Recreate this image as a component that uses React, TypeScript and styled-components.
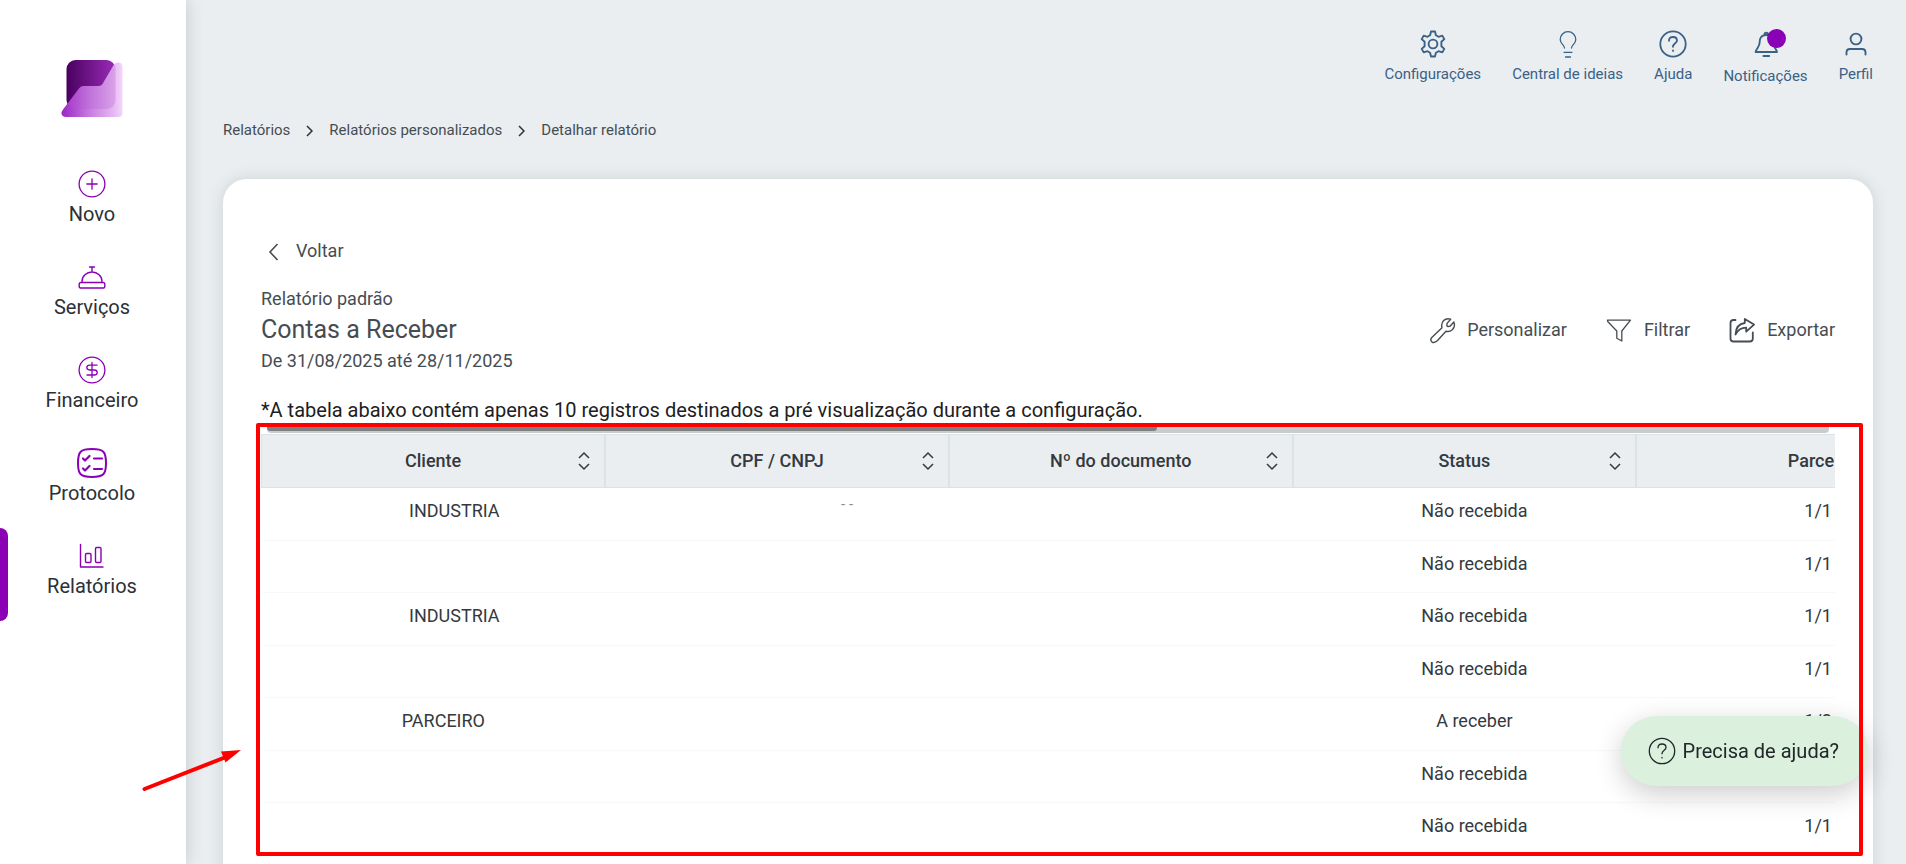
import React from "react";
import styled, { createGlobalStyle } from "styled-components";

const GlobalStyle = createGlobalStyle`
  *, *::before, *::after { box-sizing: border-box; }
  body {
    margin: 0;
    background: #eaeef1;
    color: #2b3136;
    font-family: Roboto, "Liberation Sans", sans-serif;
  }
  button { font: inherit; color: inherit; background: none; border: 0; padding: 0; cursor: pointer; }
  a { color: inherit; text-decoration: none; }
  svg { display: block; flex: none; }
`;

const Page = styled.div`
  display: flex;
  height: 100vh;
  overflow: hidden;
`;

const Sidebar = styled.aside`
  flex: none;
  width: 186px;
  display: flex;
  flex-direction: column;
  background: #fff;
  box-shadow: 0 0 16px rgba(60, 70, 60, 0.22);
`;

const LogoLink = styled.a`
  display: flex;
  justify-content: center;
  padding: 60px 2px 38px 0;
`;

const NavItem = styled.a<{ $active?: boolean }>`
  position: relative;
  display: flex;
  flex-direction: column;
  align-items: center;
  height: 93px;
  padding: 14px 2px 0 0;
  gap: 4px;
  font-size: 20px;
  line-height: 24px;

  &::before {
    content: "";
    display: ${(p) => (p.$active ? "block" : "none")};
    position: absolute;
    left: 0;
    top: 0;
    bottom: 0;
    width: 8px;
    border-radius: 0 8px 8px 0;
    background: #8a00b4;
  }
`;

const NavIcon = styled.span`
  display: flex;
  align-items: center;
  justify-content: center;
  height: 28px;
`;

const Main = styled.main`
  flex: 1;
  min-width: 0;
  padding: 0 33px 0 37px;
`;

const TopBar = styled.header`
  display: flex;
  justify-content: flex-end;
  gap: 31px;
  padding-top: 30px;
`;

const TopAction = styled.button<{ $drop?: boolean }>`
  position: relative;
  display: flex;
  flex-direction: column;
  align-items: center;
  justify-content: flex-start;
  gap: ${(p) => (p.$drop ? 8 : 6)}px;
  height: 60px;
  color: #3a6186;
  font-size: 15px;
  line-height: 20px;
`;

const NoticeDot = styled.span`
  position: absolute;
  top: -1px;
  left: 50%;
  margin-left: 1px;
  width: 19px;
  height: 19px;
  border-radius: 50%;
  background: #8a00b4;
`;

const Breadcrumb = styled.nav`
  display: flex;
  align-items: center;
  gap: 16px;
  padding: 30px 0 39px;
  color: #454d53;
  font-size: 15px;
  line-height: 20px;
`;

const Card = styled.section`
  min-height: 720px;
  padding: 60px 38px 40px;
  border-radius: 24px 24px 0 0;
  background: #fff;
  box-shadow: 0 0 16px rgba(60, 70, 60, 0.16);
  color: #454d53;
`;

const BackButton = styled.button`
  display: flex;
  align-items: center;
  gap: 11px;
  font-size: 18px;
  line-height: 24px;
`;

const TitleRow = styled.div`
  display: flex;
  justify-content: space-between;
  align-items: center;
  margin-top: 24px;
`;

const Subtitle = styled.p`
  margin: 0;
  font-size: 18px;
  line-height: 24px;
`;

const Title = styled.h1`
  margin: 0;
  font-size: 25px;
  font-weight: 400;
  line-height: 38px;
`;

const Tools = styled.div`
  display: flex;
  gap: 38px;
`;

const Tool = styled.button`
  display: flex;
  align-items: center;
  gap: 11px;
  font-size: 18px;
  line-height: 24px;
`;

const Note = styled.p`
  margin: 24px 0 0;
  color: #1c2023;
  font-size: 20px;
  line-height: 27px;
`;

const TableRegion = styled.div`
  position: relative;
`;

const ScrollTrack = styled.div`
  height: 9px;
  margin: 0 6px 1px;
  border-radius: 4px;
  background: #c8cccf;
`;

const ScrollThumb = styled.div`
  width: 57%;
  height: 7px;
  border-radius: 4px;
  background: #7d7f81;
`;

const TableClip = styled.div`
  overflow: hidden;
`;

const Table = styled.table`
  width: 1720px;
  table-layout: fixed;
  border-collapse: collapse;
  color: #33393e;
  font-size: 18px;
  line-height: 24px;
`;

const HeadCell = styled.th`
  height: 53px;
  padding: 0;
  border: 1px solid #dde2e5;
  border-right-width: 2px;
  background: #eaeef1;
  font-weight: 500;

  &:last-child { padding-left: 20px; }
`;

const HeadInner = styled.div`
  display: grid;
  grid-template-columns: 1fr auto 1fr;
  align-items: center;
`;

const SortButton = styled.button`
  grid-column: 3;
  justify-self: end;
  margin-right: 13px;
`;

const HeadLabel = styled.span`
  grid-column: 2;
`;

const Cell = styled.td`
  height: 53px;
  padding: 0 0 6px 20px;
  border-bottom: 1px solid #f7f8f8;
  text-align: center;

  tr:nth-child(even) > & { height: 52px; }
`;

const Blank = styled.span<{ $wide?: boolean }>`
  display: inline-block;
  width: ${(p) => (p.$wide ? 120 : 22)}px;
`;

const Dashes = styled.span`
  color: #8b9094;
  font-size: 15px;
  line-height: 10px;
  vertical-align: 9px;
`;

const Highlight = styled.div`
  position: absolute;
  z-index: 3;
  inset: -1px -28px 0 -5px;
  border: 4px solid #ff0000;
  border-radius: 2px;
  pointer-events: none;
`;

const Pointer = styled.svg`
  position: absolute;
  z-index: 3;
  left: -119px;
  bottom: 64px;
`;

const HelpButton = styled.button`
  position: fixed;
  z-index: 2;
  right: 38px;
  bottom: 78px;
  display: flex;
  align-items: center;
  gap: 7px;
  height: 70px;
  && { padding: 0 29px 0 27px; }
  border-radius: 35px;
  background: #dbf0dd;
  box-shadow: 0 8px 28px rgba(0, 0, 0, 0.2);
  color: #22272a;
  font-size: 20px;
  line-height: 24px;
`;

const Logo = () => (
  <svg width="62" height="58" viewBox="0 0 62 58">
    <defs>
      <linearGradient id="dark" x1="0" x2="1">
        <stop offset="0" stopColor="#4a0060" />
        <stop offset="1" stopColor="#9a2cb8" />
      </linearGradient>
      <linearGradient id="light" x1="0" x2="1">
        <stop offset="0" stopColor="#9a24c4" />
        <stop offset="0.45" stopColor="#c67adf" />
        <stop offset="0.85" stopColor="#e6b8f2" />
        <stop offset="1" stopColor="#f4d8fc" />
      </linearGradient>
      <clipPath id="sheet">
        <path d="M53 4.500Q55 2 58 2.500Q61.500 3 61.500 7V53Q61.500 57 57.500 57H5Q1.500 57 .5 54Q0 52 2 49.500L18 28.500Q19.500 26 22 26H37Q40 26.500 41.500 24Z" />
      </clipPath>
    </defs>
    <rect x="5.500" y="0" width="49" height="49" rx="9" fill="url(#dark)" />
    <g clipPath="url(#sheet)">
      <rect width="62" height="58" fill="url(#light)" />
      <rect x="5.500" y="0" width="49" height="49" rx="9" fill="#b055cc" opacity=".25" />
    </g>
  </svg>
);

const Line = ({ size = 28, w = 1.3, children, color = "currentColor" }: {
  size?: number; w?: number; color?: string; children: React.ReactNode;
}) => (
  <svg width={size} height={size} viewBox="0 0 28 28" fill="none" stroke={color}
    strokeWidth={w} strokeLinecap="round" strokeLinejoin="round" aria-hidden="true">
    {children}
  </svg>
);

const PURPLE = "#8a00b4";

const PlusIcon = () => (
  <Line color={PURPLE}><circle cx="14" cy="14" r="12.900" /><path d="M14 8.800v10.400M8.800 14h10.400" /></Line>
);
const BellDeskIcon = () => (
  <Line color={PURPLE} w={1.4}>
    <path d="M11.500 4h5M14 4v5M4 19.500v-1A10 9.500 0 0 1 24 18.500v1M3 19.500H25Q26.800 19.500 26.800 21.500V23.500Q26.800 25 25.500 25H2.500Q1.200 25 1.200 23.500V21.500Q1.200 19.500 3 19.500Z" />
  </Line>
);
const MoneyIcon = () => (
  <Line color={PURPLE}>
    <circle cx="14" cy="14" r="12.900" />
    <path d="M14 6.500v15M19 9.200H11.700Q8.800 9.200 8.800 11.600Q8.800 14 11.700 14H16.300Q19.200 14 19.200 16.500Q19.200 19 16.300 19H9" />
  </Line>
);
const ChecklistIcon = () => (
  <svg width="30" height="30" viewBox="0 0 30 30" fill="none" stroke={PURPLE} strokeWidth="2"
    strokeLinecap="round" strokeLinejoin="round" aria-hidden="true">
    <path d="M15 1C26.500 1 29 3.500 29 15S26.500 29 15 29S1 26.500 1 15S3.500 1 15 1Z" />
    <path d="M6 10.500l2 2L12.500 8M6 20.500l2 2L12.500 18M17 10.500h8M17 21h8" strokeWidth="2.200" />
  </svg>
);
const ChartIcon = () => (
  <Line color={PURPLE} w={1.4}>
    <path d="M2.500 2.500V25H25" />
    <rect x="7.500" y="11.500" width="5.500" height="9" rx="1.200" />
    <rect x="17.500" y="5.500" width="5.500" height="15" rx="1.200" />
  </Line>
);

const GearIcon = () => (
  <Line w={1.9}>
    <circle cx="14" cy="14" r="4.400" />
    <path d="M12 1.500h4l.9 3.800 2.600 1.500 3.800-1.200 2 3.500-2.900 2.600v4.600l2.900 2.600-2 3.500-3.800-1.200-2.600 1.500L16 26.500h-4l-.9-3.800-2.600-1.500-3.800 1.200-2-3.500 2.900-2.600v-4.600L2.700 9.100l2-3.500 3.800 1.200 2.600-1.500z" />
  </Line>
);
const BulbIcon = () => (
  <Line w={1.3}>
    <path d="M10.500 18C10.500 15 6.200 14 6.200 9.500a7.800 7.800 0 0 1 15.600 0C21.800 14 17.500 15 17.500 18M10 22.300h8M11.500 27h5" />
  </Line>
);
const QuestionIcon = ({ w = 1.8 }: { w?: number }) => (
  <Line w={w}>
    <circle cx="14" cy="14" r="12.700" />
    <path d="M10 10.800Q10 7 14 7T18 10.500C18 13.300 14 13.300 14 16.800M14 20.500v.4" />
  </Line>
);
const BellIcon = () => (
  <Line w={1.9}>
    <path d="M12.500 4.500a1.800 1.800 0 0 1 3.600 0M14.300 5C9 5 7.600 8.500 7.600 12.500C7.600 17 4.500 18 3.600 22H25C24 18 21 17 21 12.500C21 8.500 19.500 5 14.300 5Z" />
    <path d="M11.500 26h5.600" strokeWidth="2" />
  </Line>
);
const UserIcon = () => (
  <Line w={1.9}>
    <circle cx="14" cy="9" r="5.400" />
    <path d="M4.500 24.500v-2Q4.500 19 8 19h12Q23.500 19 23.500 22.500V24.500" />
  </Line>
);
const WrenchIcon = () => (
  <svg width="28" height="28" viewBox="1 1 22 22" fill="none" stroke="currentColor" strokeWidth="1.100"
    strokeLinecap="round" strokeLinejoin="round" aria-hidden="true">
    <path d="M16 6.800l-.2 1.700q0 .7.800.7l1.700-.1 3-3.400q1.400 3.600-1.200 6.100-2.100 1.900-5 1.200l-6.600 7.300q-1.900 2-4.200 1.300-2-1.800-.3-3.700l8-7.600q-.9-3.400 1.300-5.700 2.200-2.200 5.500-1.100z" />
  </svg>
);
const FunnelIcon = () => (
  <Line w={1.3}><path d="M2.500 4.200h23L16.800 15v10l-5-2.800V15L2.700 5.500z" /></Line>
);
const ShareIcon = () => (
  <Line w={1.8}>
    <path d="M7.500 4H5.500Q2.500 4 2.500 7v15.500q0 3 3 3h16.300q3 0 3-3v-6" />
    <path d="M16.800 7V3L26 8.600l-7.800 7v-3.900Q11.500 11.500 7.500 18.500Q8 8 16.800 7Z" />
  </Line>
);
const SortIcon = () => (
  <svg width="14" height="20" viewBox="0 0 14 20" fill="none" stroke="#33393e" strokeWidth="1.500" aria-hidden="true">
    <path d="M2 7l5-5 5 5M2 13l5 5 5-5" />
  </svg>
);
const Chevron = () => (
  <svg width="7" height="20" viewBox="0 0 7 20" fill="none" stroke="#2b3136" strokeWidth="1.500" aria-hidden="true">
    <path d="M1 6l5 5-5 5" />
  </svg>
);
const BackIcon = () => (
  <svg width="24" height="24" viewBox="0 0 24 24" fill="none" stroke="currentColor" strokeWidth="1.600" aria-hidden="true">
    <path d="M16.500 5l-7.500 8 7.500 8" />
  </svg>
);

const NAV = [
  { label: "Novo", icon: <PlusIcon /> },
  { label: "Serviços", icon: <BellDeskIcon /> },
  { label: "Financeiro", icon: <MoneyIcon /> },
  { label: "Protocolo", icon: <ChecklistIcon /> },
  { label: "Relatórios", icon: <ChartIcon />, active: true },
];

const COLUMNS = ["Cliente", "CPF / CNPJ", "Nº do documento", "Status", "Parcela"];

const ROWS = [
  { client: "INDUSTRIA", masked: true, dashes: true, status: "Não recebida", part: "1/1" },
  { client: "", status: "Não recebida", part: "1/1" },
  { client: "INDUSTRIA", masked: true, status: "Não recebida", part: "1/1" },
  { client: "", status: "Não recebida", part: "1/1" },
  { client: "PARCEIRO", status: "A receber", part: "1/2" },
  { client: "", status: "Não recebida", part: "" },
  { client: "", status: "Não recebida", part: "1/1" },
];

export default function App() {
  return (
    <>
      <GlobalStyle />
      <Page>
        <Sidebar>
          <LogoLink href="#" aria-label="Início"><Logo /></LogoLink>
          <nav>
            {NAV.map((n) => (
              <NavItem key={n.label} href="#" $active={n.active}><NavIcon>{n.icon}</NavIcon>{n.label}</NavItem>
            ))}
          </nav>
        </Sidebar>
        <Main>
          <TopBar>
            <TopAction><GearIcon />Configurações</TopAction>
            <TopAction><BulbIcon />Central de ideias</TopAction>
            <TopAction><QuestionIcon />Ajuda</TopAction>
            <TopAction $drop><BellIcon /><NoticeDot />Notificações</TopAction>
            <TopAction><UserIcon />Perfil</TopAction>
          </TopBar>
          <Breadcrumb aria-label="Navegação">
            <a href="#">Relatórios</a>
            <Chevron />
            <a href="#">Relatórios personalizados</a>
            <Chevron />
            <a href="#">Detalhar relatório</a>
          </Breadcrumb>
          <Card>
            <BackButton><BackIcon />Voltar</BackButton>
            <TitleRow>
              <div>
                <Subtitle>Relatório padrão</Subtitle>
                <Title>Contas a Receber</Title>
                <Subtitle>De 31/08/2025 até 28/11/2025</Subtitle>
              </div>
              <Tools>
                <Tool><WrenchIcon />Personalizar</Tool>
                <Tool><FunnelIcon />Filtrar</Tool>
                <Tool><ShareIcon />Exportar</Tool>
              </Tools>
            </TitleRow>
            <Note>*A tabela abaixo contém apenas 10 registros destinados a pré visualização durante a configuração.</Note>
            <TableRegion>
              <ScrollTrack><ScrollThumb /></ScrollTrack>
              <TableClip>
                <Table>
                  <thead>
                    <tr>
                      {COLUMNS.map((c) => (
                        <HeadCell key={c} scope="col">
                          <HeadInner>
                            <HeadLabel>{c}</HeadLabel>
                            <SortButton aria-label={"Ordenar por " + c}><SortIcon /></SortButton>
                          </HeadInner>
                        </HeadCell>
                      ))}
                    </tr>
                  </thead>
                  <tbody>
                    {ROWS.map((r, i) => (
                      <tr key={i}>
                        <Cell>{r.masked && <Blank />}{r.client}</Cell>
                        <Cell>{r.dashes && <><Blank $wide /><Dashes>- -</Dashes></>}</Cell>
                        <Cell />
                        <Cell>{r.status}</Cell>
                        <Cell>{r.part}</Cell>
                      </tr>
                    ))}
                  </tbody>
                </Table>
              </TableClip>
              <Highlight />
              <Pointer width="101" height="44" viewBox="0 0 101 44" aria-hidden="true">
                <path d="M2.500 41L84 9" stroke="#ff0000" strokeWidth="4" strokeLinecap="round" />
                <path d="M99 2L79 3.500L83.500 14.500Z" fill="#ff0000" />
              </Pointer>
            </TableRegion>
          </Card>
        </Main>
        <HelpButton><QuestionIcon w={1.3} />Precisa de ajuda?</HelpButton>
      </Page>
    </>
  );
}
